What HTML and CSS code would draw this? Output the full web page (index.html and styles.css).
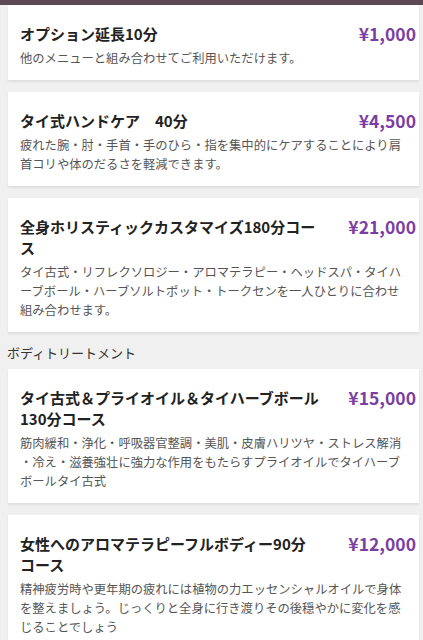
FILE: index.html
```html
<!DOCTYPE html>
<html lang="ja">
<head>
  <meta charset="UTF-8">
  <meta name="viewport" content="width=device-width, initial-scale=1.0">
  <title>メニュー</title>
  <link rel="stylesheet" href="styles.css">
</head>
<body>
  <div class="top-bar"></div>

  <div class="menu-list">
    <div class="menu-card first">
      <div class="menu-head">
        <div class="menu-title">オプション延長10分</div>
        <div class="menu-price">¥1,000</div>
      </div>
      <div class="menu-desc">他のメニューと組み合わせてご利用いただけます。</div>
    </div>

    <div class="menu-card">
      <div class="menu-head">
        <div class="menu-title">タイ式ハンドケア　40分</div>
        <div class="menu-price">¥4,500</div>
      </div>
      <div class="menu-desc">疲れた腕・肘・手首・手のひら・指を集中的にケアすることにより肩<br>首コリや体のだるさを軽減できます。</div>
    </div>

    <div class="menu-card">
      <div class="menu-head">
        <div class="menu-title">全身ホリスティックカスタマイズ180分コー<br>ス</div>
        <div class="menu-price">¥21,000</div>
      </div>
      <div class="menu-desc">タイ古式・リフレクソロジー・アロマテラピー・ヘッドスパ・タイハ<br>ーブボール・ハーブソルトポット・トークセンを一人ひとりに合わせ<br>組み合わせます。</div>
    </div>

    <div class="section-title">ボディトリートメント</div>

    <div class="menu-card">
      <div class="menu-head">
        <div class="menu-title">タイ古式＆プライオイル＆タイハーブボール130分コース</div>
        <div class="menu-price">¥15,000</div>
      </div>
      <div class="menu-desc">筋肉緩和・浄化・呼吸器官整調・美肌・皮膚ハリツヤ・ストレス解消<br>・冷え・滋養強壮に強力な作用をもたらすプライオイルでタイハーブ<br>ボールタイ古式</div>
    </div>

    <div class="menu-card">
      <div class="menu-head">
        <div class="menu-title">女性へのアロマテラピーフルボディー90分コース</div>
        <div class="menu-price">¥12,000</div>
      </div>
      <div class="menu-desc">精神疲労時や更年期の疲れには植物の力エッセンシャルオイルで身体<br>を整えましょう。じっくりと全身に行き渡りその後穏やかに変化を感<br>じることでしょう</div>
    </div>
  </div>
</body>
</html>
```

FILE: styles.css
```css
body {
  font-family: "Noto Sans CJK JP", "Noto Sans", sans-serif;
  margin: 0;
  background-color: #f0f0f0;
  color: #222;
}
.top-bar {
  height: 5px;
  background-color: #5c4954;
}
.menu-list {
  padding: 0 4px 0 8px;
}
.menu-card {
  background-color: white;
  margin-top: 12px;
  padding: 18px 3px 12px 12px;
  box-shadow: 0 2px 2px rgba(0, 0, 0, 0.08);
}
.menu-card.first {
  margin-top: 0;
}
.menu-head {
  display: flex;
  align-items: flex-start;
}
.menu-title {
  flex: 0 1 300.5px;
  font-size: 15px;
  font-weight: bold;
  line-height: 21px;
  color: #222;
}
.menu-price {
  flex: none;
  margin-left: auto;
  font-size: 17.5px;
  font-weight: bold;
  line-height: 21px;
  color: #7b3fa3;
}
.menu-desc {
  margin-top: 5px;
  font-size: 12.3px;
  line-height: 19px;
  color: #555;
  white-space: nowrap;
}
.section-title {
  margin: 12px 0 0 -1px;
  font-size: 13px;
  line-height: 18px;
  padding-bottom: 7px;
  color: #333;
}
.section-title + .menu-card {
  margin-top: 0;
}
```
